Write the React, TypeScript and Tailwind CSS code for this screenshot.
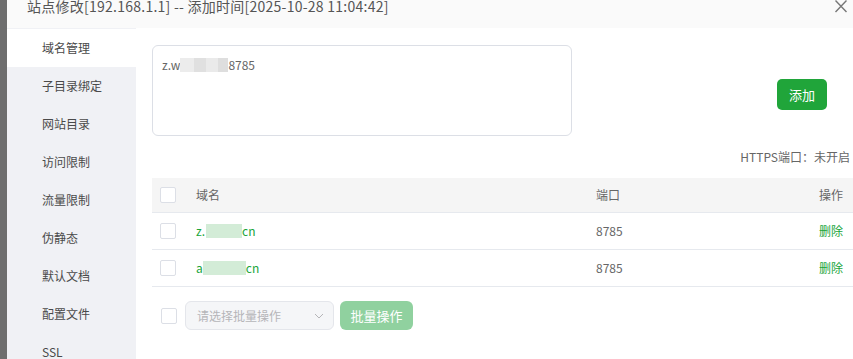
import React from "react";

const font = { fontFamily: '"Noto Sans CJK SC", "Noto Sans", sans-serif' };

function Box() {
  return <span className="block w-[16px] h-[16px] rounded-[2px] border border-[#dcdfe6] bg-white" />;
}

const menu = ["域名管理", "子目录绑定", "网站目录", "访问限制", "流量限制", "伪静态", "默认文档", "配置文件", "SSL"];

export default function App() {
  return (
    <div className="w-[853px] h-[359px] overflow-hidden flex bg-white" style={font}>
      <div className="w-[7px] h-full bg-[#6e6e6e] shrink-0" />
      <div className="flex-1 flex flex-col min-w-0">
        <div className="h-[28px] shrink-0 bg-[#fafafa] flex items-start pl-[20px] pr-[5px]">
          <span className="text-[14px] leading-[14px] tracking-[0.25px] text-[#555] -mt-[1px] whitespace-nowrap">
            站点修改[192.168.1.1] -- 添加时间[2025-10-28 11:04:42]
          </span>
          <svg className="ml-auto mt-0" width="14" height="14" viewBox="0 0 14 14">
            <path d="M1.5 0.5 L12.5 12 M12.5 0.5 L1.5 12" stroke="#777" strokeWidth="1.4" fill="none" />
          </svg>
        </div>
        <div className="flex-1 flex min-h-0">
          <div className="w-[129px] shrink-0 bg-[#f0f1f5] flex flex-col pt-[1px]">
            {menu.map((m, i) => (
              <div
                key={m}
                className={`h-[38px] shrink-0 flex items-center pl-[35px] text-[12px] text-[#4a4a4a] ${i === 0 ? "bg-white" : ""}`}
              >
                {m}
              </div>
            ))}
          </div>
          <div className="flex-1 flex flex-col pl-[16px] pt-[17px] min-w-0">
            <div className="flex items-start">
              <div className="w-[420px] h-[91px] border border-[#dcdfe6] rounded-[6px] px-[9px] pt-[11px] text-[12px] leading-[16px] text-[#666] flex items-start">
                <span>z.w</span>
                <span className="inline-block w-[48px] h-[14px] mt-[1px] bg-[linear-gradient(90deg,#ececec_0,#ececec_30%,#e0e0e0_30%,#e0e0e0_55%,#eaeaea_55%,#eaeaea_80%,#dedede_80%)]" />
                <span>8785</span>
              </div>
              <button className="ml-auto mr-[26px] mt-[34px] w-[50px] h-[31px] rounded-[5px] bg-[#20a53a] text-white text-[13px] flex items-center justify-center">
                添加
              </button>
            </div>
            <div className="h-[14px] mt-[14px] flex justify-end pr-[3px] text-[12px] leading-[14px] text-[#666]">
              HTTPS端口：未开启
            </div>
            <div className="mt-[14px] flex flex-col text-[12px]">
              <div className="h-[35px] bg-[#f5f5f5] border-b border-[#e6e9ee] flex items-center text-[#666] pl-[8px] pr-[10px]">
                <Box />
                <span className="ml-[20px] w-[400px]">域名</span>
                <span>端口</span>
                <span className="ml-auto">操作</span>
              </div>
              {[
                ["z.", "w-[36px]", "ml-[1px]"],
                ["a", "w-[43px]", ""],
              ].map(([p, w, g], i) => (
                <div key={i} className="h-[37px] border-b border-[#e6e9ee] flex items-center pl-[8px] pr-[10px] text-[#666]">
                  <Box />
                  <span className="ml-[20px] w-[400px] flex items-center text-[#20a53a]">
                    <span>{p}</span>
                    <span className={`inline-block ${w} ${g} h-[14px] bg-[#d3ecd7]`} />
                    <span>cn</span>
                  </span>
                  <span>8785</span>
                  <span className="ml-auto text-[#20a53a]">删除</span>
                </div>
              ))}
            </div>
            <div className="mt-[14px] flex items-center pl-[9px]">
              <Box />
              <div className="ml-[8px] w-[149px] h-[29px] rounded-[6px] border border-[#e4e6eb] bg-[#f5f6f8] flex items-center pl-[11px] pr-[9px] text-[12px] text-[#b5b5b8]">
                请选择批量操作
                <svg className="ml-auto" width="10" height="6" viewBox="0 0 10 6">
                  <path d="M1 1 L5 5 L9 1" stroke="#b5b5b8" strokeWidth="1" fill="none" />
                </svg>
              </div>
              <button className="ml-[6px] w-[73px] h-[29px] rounded-[6px] bg-[#90d19f] text-white text-[13px] flex items-center justify-center">
                批量操作
              </button>
            </div>
          </div>
        </div>
      </div>
    </div>
  );
}
